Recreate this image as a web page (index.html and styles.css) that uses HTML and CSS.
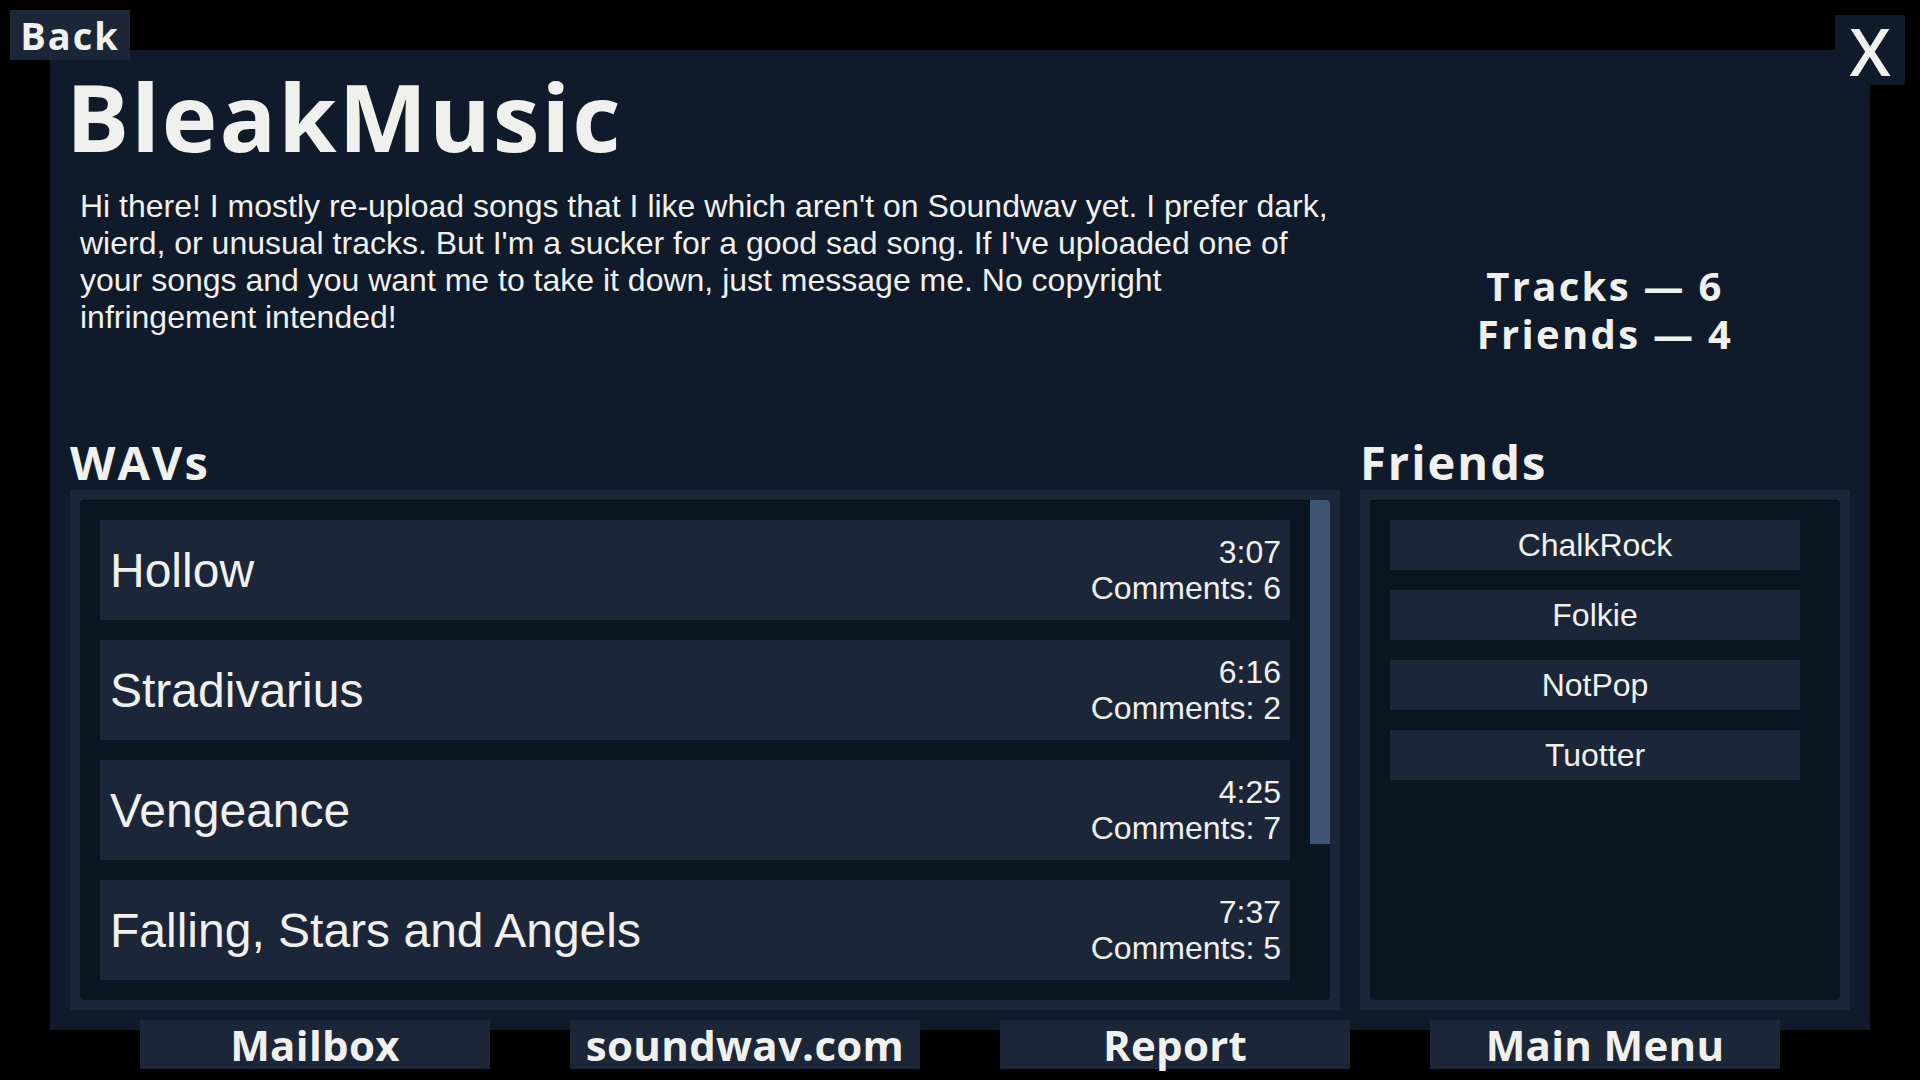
FILE: index.html
```html
<!DOCTYPE html>
<html lang="en">
<head>
    <meta charset="UTF-8">
    <meta name="viewport" content="width=device-width, initial-scale=1.0">
    <title>BleakMusic - Soundwav</title>
    <link rel="stylesheet" href="styles.css">
</head>
<body>
    <a href="#" class="back-btn">Back</a>
    <a href="#" class="close-btn">X</a>

    <main class="profile-panel">
        <h1 class="profile-name">BleakMusic</h1>

        <div class="profile-row">
            <p class="profile-bio">Hi there! I mostly re-upload songs that I like which aren't on Soundwav yet. I prefer dark, wierd, or unusual tracks. But I'm a sucker for a good sad song. If I've uploaded one of your songs and you want me to take it down, just message me. No copyright infringement intended!</p>
            <p class="profile-stats">Tracks — 6<br>Friends — 4</p>
        </div>

        <div class="lists">
            <section class="wav-section">
                <h2 class="section-title">WAVs</h2>
                <div class="list-frame">
                    <div class="list-inner wav-list">
                        <div class="tracks">
                            <div class="track">
                                <span class="track-name">Hollow</span>
                                <div class="track-info"><span>3:07</span><span>Comments: 6</span></div>
                            </div>
                            <div class="track">
                                <span class="track-name">Stradivarius</span>
                                <div class="track-info"><span>6:16</span><span>Comments: 2</span></div>
                            </div>
                            <div class="track">
                                <span class="track-name">Vengeance</span>
                                <div class="track-info"><span>4:25</span><span>Comments: 7</span></div>
                            </div>
                            <div class="track">
                                <span class="track-name">Falling, Stars and Angels</span>
                                <div class="track-info"><span>7:37</span><span>Comments: 5</span></div>
                            </div>
                        </div>
                        <div class="scrollbar"><div class="scroll-thumb"></div></div>
                    </div>
                </div>
            </section>

            <section class="friends-section">
                <h2 class="section-title">Friends</h2>
                <div class="list-frame">
                    <div class="list-inner friend-list">
                        <a href="#" class="friend">ChalkRock</a>
                        <a href="#" class="friend">Folkie</a>
                        <a href="#" class="friend">NotPop</a>
                        <a href="#" class="friend">Tuotter</a>
                    </div>
                </div>
            </section>
        </div>
    </main>

    <nav class="bottom-nav">
        <a href="#" class="nav-btn">Mailbox</a>
        <a href="#" class="nav-btn">soundwav.com</a>
        <a href="#" class="nav-btn">Report</a>
        <a href="#" class="nav-btn">Main Menu</a>
    </nav>
</body>
</html>
```

FILE: styles.css
```css
:root {
    --panel-color: #0f1a2a;
    --frame-color: #1c2639;
    --inner-color: #0b1521;
    --thumb-color: #3d5572;
    --text-color: #f0f0ec;
    --heading-font: "Open Sans", "Noto Sans", sans-serif;
    --body-font: "Liberation Sans", Arial, sans-serif;
}

body {
    margin: 0;
    background-color: #000;
    color: var(--text-color);
    font-family: var(--body-font);
    width: 1920px;
    height: 1080px;
    overflow: hidden;
}

a {
    color: inherit;
    text-decoration: none;
}

p {
    margin: 0;
}

/* corner buttons sit over the panel edges */
.back-btn {
    position: absolute;
    top: 10px;
    left: 10px;
    width: 120px;
    height: 50px;
    display: flex;
    align-items: center;
    justify-content: center;
    background-color: var(--frame-color);
    font-family: var(--heading-font);
    font-weight: 700;
    font-size: 38px;
    letter-spacing: 2px;
    z-index: 2;
}

.close-btn {
    position: absolute;
    top: 15px;
    right: 15px;
    width: 70px;
    height: 70px;
    display: flex;
    align-items: center;
    justify-content: center;
    background-color: var(--panel-color);
    font-family: var(--heading-font);
    font-weight: 600;
    font-size: 66px;
    line-height: 1;
    z-index: 2;
}

.profile-panel {
    box-sizing: border-box;
    width: 1820px;
    height: 980px;
    margin: 50px 50px 0;
    padding: 19px 20px 20px;
    background-color: var(--panel-color);
    display: flex;
    flex-direction: column;
}

.profile-name {
    margin: 0 0 0 -4px;
    font-family: var(--heading-font);
    font-weight: 700;
    font-size: 94px;
    line-height: 94px;
    letter-spacing: 2px;
}

.profile-row {
    display: flex;
    align-items: flex-start;
    margin-top: 25px;
    height: 251px;
}

.profile-bio {
    width: 1262px;
    margin-left: 10px;
    font-size: 32px;
    line-height: 37px;
}

.profile-stats {
    width: 400px;
    margin-left: 63px;
    margin-top: 74px;
    text-align: center;
    font-family: var(--heading-font);
    font-weight: 700;
    font-size: 40px;
    line-height: 48px;
    letter-spacing: 2.3px;
}

.lists {
    display: flex;
    gap: 20px;
}

.wav-section {
    width: 1270px;
}

.friends-section {
    width: 490px;
}

.section-title {
    margin: 0 0 5px;
    font-family: var(--heading-font);
    font-weight: 700;
    font-size: 47px;
    line-height: 46px;
    letter-spacing: 2px;
}

.list-frame {
    height: 520px;
    box-sizing: border-box;
    padding: 10px;
    background-color: var(--frame-color);
}

.list-inner {
    height: 100%;
    background-color: var(--inner-color);
    border-radius: 4px;
    box-shadow: inset 0 1px 0 #060c14;
    overflow: hidden;
}

.wav-list {
    display: flex;
}

.tracks {
    flex: 1;
    display: flex;
    flex-direction: column;
    gap: 20px;
    padding: 20px 20px 0 20px;
}

.track {
    height: 100px;
    flex-shrink: 0;
    display: flex;
    align-items: center;
    justify-content: space-between;
    padding: 0 9px 0 10px;
    background-color: var(--frame-color);
}

.track-name {
    font-size: 48px;
}

.track-info {
    display: flex;
    flex-direction: column;
    align-items: flex-end;
    font-size: 32px;
    line-height: 36px;
}

.scrollbar {
    width: 20px;
    background-color: #0c1622;
}

.scroll-thumb {
    height: 344px;
    background-color: var(--thumb-color);
}

.friend-list {
    display: flex;
    flex-direction: column;
    gap: 20px;
    padding: 20px 0 0 20px;
    box-sizing: border-box;
}

.friend {
    width: 410px;
    height: 50px;
    display: flex;
    align-items: center;
    justify-content: center;
    background-color: var(--frame-color);
    font-size: 32px;
}

.bottom-nav {
    position: relative;
    display: flex;
    justify-content: center;
    gap: 80px;
    margin-top: -10px;
}

.nav-btn {
    width: 350px;
    height: 49px;
    display: flex;
    align-items: center;
    justify-content: center;
    background-color: var(--frame-color);
    font-family: var(--heading-font);
    font-weight: 700;
    font-size: 42px;
    letter-spacing: 0.3px;
}
```
